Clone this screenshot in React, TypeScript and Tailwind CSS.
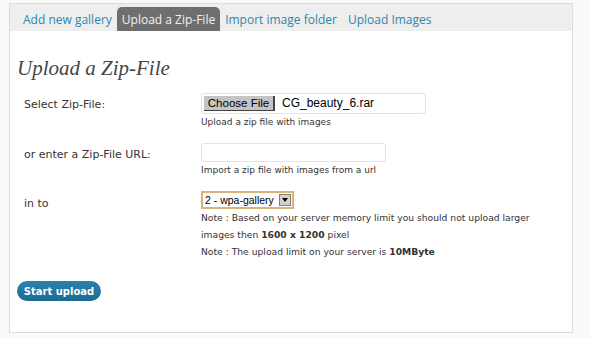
import React from "react";

export default function App() {
  const sans = { fontFamily: '"DejaVu Sans", Verdana, sans-serif' };
  const arial = { fontFamily: '"Liberation Sans", Arial, sans-serif' };
  return (
    <div className="w-[590px] h-[338px] bg-[#f9f9f9] pt-[3px] pl-[9px]" style={sans}>
      <div className="w-[564px] h-[330px] bg-white border border-[#dcdcdc] flex flex-col">
        <div className="h-[27px] bg-[#eeeeee] flex items-end pl-[12px] gap-[4px] text-[12px] text-[#2f86ad]" style={{ fontFamily: '"Open Sans", sans-serif' }}>
          <span className="h-[24px] flex items-center pt-[2px] px-[1px]">Add new gallery</span>
          <span className="h-[24px] flex items-center pt-[2px] bg-[#6e6e6e] text-[#f2f2f2] rounded-t-[5px] px-[5px]">Upload a Zip-File</span>
          <span className="h-[24px] flex items-center pt-[2px] px-[1px]">Import image folder</span>
          <span className="h-[24px] flex items-center pt-[2px] pl-[6px]">Upload Images</span>
        </div>
        <div className="pl-[7px] pt-[24px]">
          <h2 className="text-[21px] italic text-[#464646] leading-[26px]" style={{ fontFamily: '"Liberation Serif", Georgia, serif' }}>Upload a Zip-File</h2>
          <div className="mt-[12px] grid grid-cols-[184px_1fr] text-[11px] text-[#333] leading-[13px]">
            <div className="pl-[7px] pt-[5px]">Select Zip-File:</div>
            <div>
              <div className="w-[225px] h-[21px] border border-[#e3e3e3] rounded-[3px] flex items-center pl-[2px] gap-[7px]" style={arial}>
                <span className="h-[15px] w-[71px] bg-[#c4c4c4] border-r-2 border-b border-[#444] text-[11.5px] text-black leading-[14px] text-center">Choose File</span>
                <span className="text-[12px] text-black">CG_beauty_6.rar</span>
              </div>
              <div className="text-[9px] mt-[2px] leading-[12px]">Upload a zip file with images</div>
            </div>
            <div className="pl-[7px] pt-[20px]">or enter a Zip-File URL:</div>
            <div className="pt-[15px]">
              <div className="w-[185px] h-[19px] border border-[#e3e3e3] rounded-[3px]" />
              <div className="text-[9px] mt-[2px] leading-[12px]">Import a zip file with images from a url</div>
            </div>
            <div className="pl-[7px] pt-[21px]">in to</div>
            <div className="pt-[15px]">
              <div className="w-[93px] h-[18px] border-2 border-[#d8b37a] flex items-center justify-between pl-[2px] pr-[1px] text-[10.5px] text-black whitespace-nowrap" style={arial}>
                <span>2 - wpa-gallery</span>
                <span className="w-[12px] h-[12px] bg-[#d4d0c8] border border-[#808080] flex items-center justify-center">
                  <svg width="6" height="4" viewBox="0 0 6 4"><path d="M0 0h6L3 4z" fill="#000" /></svg>
                </span>
              </div>
              <div className="text-[9.2px] leading-[17px]">
                <div>Note : Based on your server memory limit you should not upload larger</div>
                <div>images then <b>1600 x 1200</b> pixel</div>
                <div>Note : The upload limit on your server is <b>10MByte</b></div>
              </div>
            </div>
          </div>
          <button className="mt-[21px] h-[20px] w-[84px] rounded-full bg-gradient-to-b from-[#2b82ab] to-[#1d6b92] text-white text-[10px] font-bold">Start upload</button>
        </div>
      </div>
    </div>
  );
}
